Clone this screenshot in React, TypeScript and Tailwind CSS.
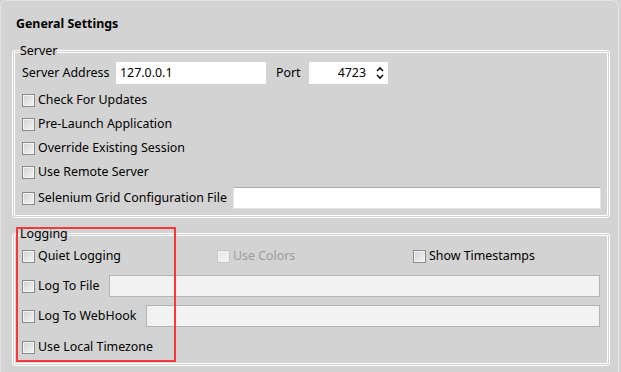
import React from "react";

function Check({ label, disabled = false }: { label: string; disabled?: boolean }) {
  return (
    <div className="flex items-center h-[24px] shrink-0">
      <span
        className={
          disabled
            ? "w-[13px] h-[13px] border border-[#c6c6c6] bg-gradient-to-br from-[#e6e6e6] to-[#f6f6f6] shadow-[inset_0_0_0_1px_#f0f0f0]"
            : "w-[13px] h-[13px] border border-[#8a8a8a] bg-gradient-to-br from-[#d2d2d2] to-[#f6f6f6] shadow-[inset_0_0_0_1px_#f4f4f4]"
        }
      />
      <span className={disabled ? "ml-[3px] text-[#9c9c9c] whitespace-nowrap" : "ml-[3px] whitespace-nowrap"}>{label}</span>
    </div>
  );
}

export default function App() {
  return (
    <div className="relative w-[621px] h-[372px] bg-[#d3d3d3] overflow-hidden text-[12.4px] leading-[16px] text-black font-['Noto_Sans','Liberation_Sans',sans-serif]">
      <div className="w-[619px] h-[380px] border-l border-t border-r border-[#e4e4e4] rounded-t-[7px] pl-[11px] pr-[8px]">
        <div className="pt-[15px] pl-[4px] h-[31px] font-bold">General Settings</div>

        <fieldset className="mt-[11px] border-[3px] border-double border-white rounded-[3px] pl-[7px] pr-[6px] pb-[5px]">
          <legend className="-ml-[2px] px-0 h-[16px] leading-[16px]">Server</legend>
          <div className="flex items-center h-[22px] mt-[3px]">
            <span className="w-[94px] whitespace-nowrap">Server Address</span>
            <div className="w-[150px] h-[22px] bg-white pl-[4px] flex items-center">127.0.0.1</div>
            <span className="ml-[10px] w-[33px]">Port</span>
            <div className="w-[79px] h-[22px] bg-white flex items-center justify-end pr-[4px]">
              <span className="mr-[10px]">4723</span>
              <svg width="8" height="14" viewBox="0 0 8 14">
                <path d="M1 5 L4 2 L7 5" fill="none" stroke="#111" strokeWidth="1.6" />
                <path d="M1 9 L4 12 L7 9" fill="none" stroke="#111" strokeWidth="1.6" />
              </svg>
            </div>
          </div>
          <div className="flex flex-col mt-[4px]">
            <Check label="Check For Updates" />
            <Check label="Pre-Launch Application" />
            <Check label="Override Existing Session" />
            <Check label="Use Remote Server" />
          </div>
          <div className="flex items-center h-[24px] mt-[2px]">
            <Check label="Selenium Grid Configuration File" />
            <div className="ml-[6px] flex-1 h-[22px] bg-white border border-[#e3e4ea] border-t-[#adadad]" />
          </div>
        </fieldset>

        <fieldset className="mt-[8px] border-[3px] border-double border-white rounded-[3px] pl-[7px] pr-[7px] pb-[4px]">
          <legend className="-ml-[2px] px-0 h-[16px] leading-[16px]">Logging</legend>
          <div className="flex items-center h-[24px] mt-[2px]">
            <div className="w-[195px]">
              <Check label="Quiet Logging" />
            </div>
            <div className="w-[196px]">
              <Check label="Use Colors" disabled />
            </div>
            <Check label="Show Timestamps" />
          </div>
          <div className="flex items-center h-[24px] mt-[6px]">
            <Check label="Log To File" />
            <div className="ml-[10px] flex-1 h-[22px] bg-[#f2f2f2] border border-[#b4b4b4]" />
          </div>
          <div className="flex items-center h-[24px] mt-[6px]">
            <Check label="Log To WebHook" />
            <div className="ml-[10px] flex-1 h-[22px] bg-[#f2f2f2] border border-[#b4b4b4]" />
          </div>
          <div className="mt-[7px]">
            <Check label="Use Local Timezone" />
          </div>
        </fieldset>
      </div>

      <div className="absolute left-[16px] top-[227px] w-[160px] h-[135px] border-2 border-[#f23a3a]" />
    </div>
  );
}
